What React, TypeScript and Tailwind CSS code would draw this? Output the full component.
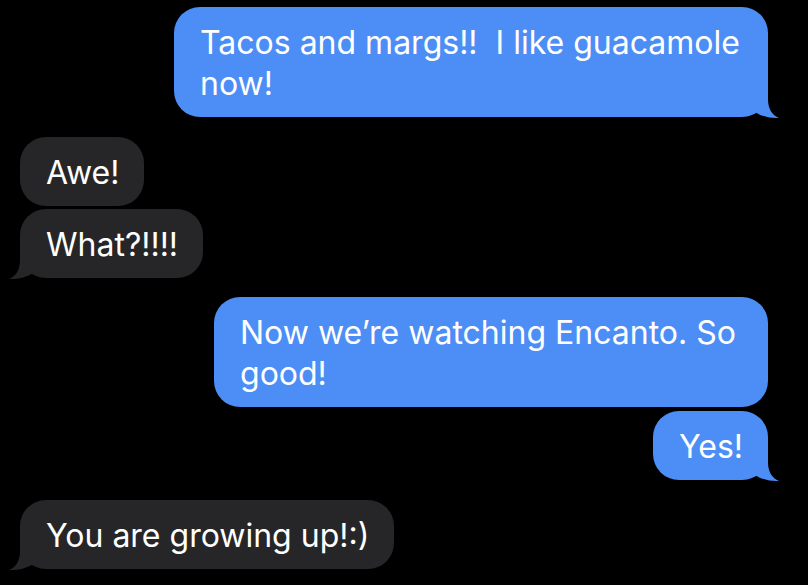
import React from 'react';

type Msg = { text: string; me: boolean; tail: boolean; width?: string; gap: string };

const MESSAGES: Msg[] = [
  { text: 'Tacos and margs!!  I like guacamole now!', me: true, tail: true, width: 'w-[594px]', gap: 'mt-[7px]' },
  { text: 'Awe!', me: false, tail: false, gap: 'mt-[20px]' },
  { text: 'What?!!!!', me: false, tail: true, gap: 'mt-[3px]' },
  { text: 'Now we\u2019re watching Encanto. So good!', me: true, tail: false, width: 'w-[554px]', gap: 'mt-[19px]' },
  { text: 'Yes!', me: true, tail: true, gap: 'mt-[4px]' },
  { text: 'You are growing up!:)', me: false, tail: true, gap: 'mt-[20px]' },
];

// tail drawn for the right side; mirrored for incoming bubbles
function Tail({ me }: { me: boolean }) {
  return (
    <svg
      width="32"
      height="32"
      viewBox="0 0 32 32"
      className={
        me
          ? 'absolute bottom-[-2px] right-[-12px] text-[#4c8ef5]'
          : 'absolute bottom-[-2px] left-[-12px] -scale-x-100 text-[#262629]'
      }
    >
      <path
        d="M20 0 L20 12 C20 22 24 28 31 31 C24 31.5 14 30 7 25 L0 20 L0 0 Z"
        fill="currentColor"
      />
    </svg>
  );
}

function Bubble({ m }: { m: Msg }) {
  return (
    <div
      className={`relative ${m.gap} ${m.width ?? ''} ${
        m.me ? 'self-end mr-[40px] bg-[#4c8ef5]' : 'self-start ml-[20px] bg-[#262629]'
      } rounded-[26px] pl-[26px] pr-[25px] pt-[15px] pb-[13px] text-white`}
    >
      {m.tail && <Tail me={m.me} />}
      <p className="relative whitespace-pre-wrap text-[32px] leading-[41px] tracking-normal">{m.text}</p>
    </div>
  );
}

export default function App() {
  return (
    <div
      className="flex h-[585px] w-[808px] flex-col overflow-hidden bg-black"
      style={{ fontFamily: 'Inter, "Noto Sans", sans-serif' }}
    >
      {MESSAGES.map((m, i) => (
        <Bubble key={i} m={m} />
      ))}
    </div>
  );
}
